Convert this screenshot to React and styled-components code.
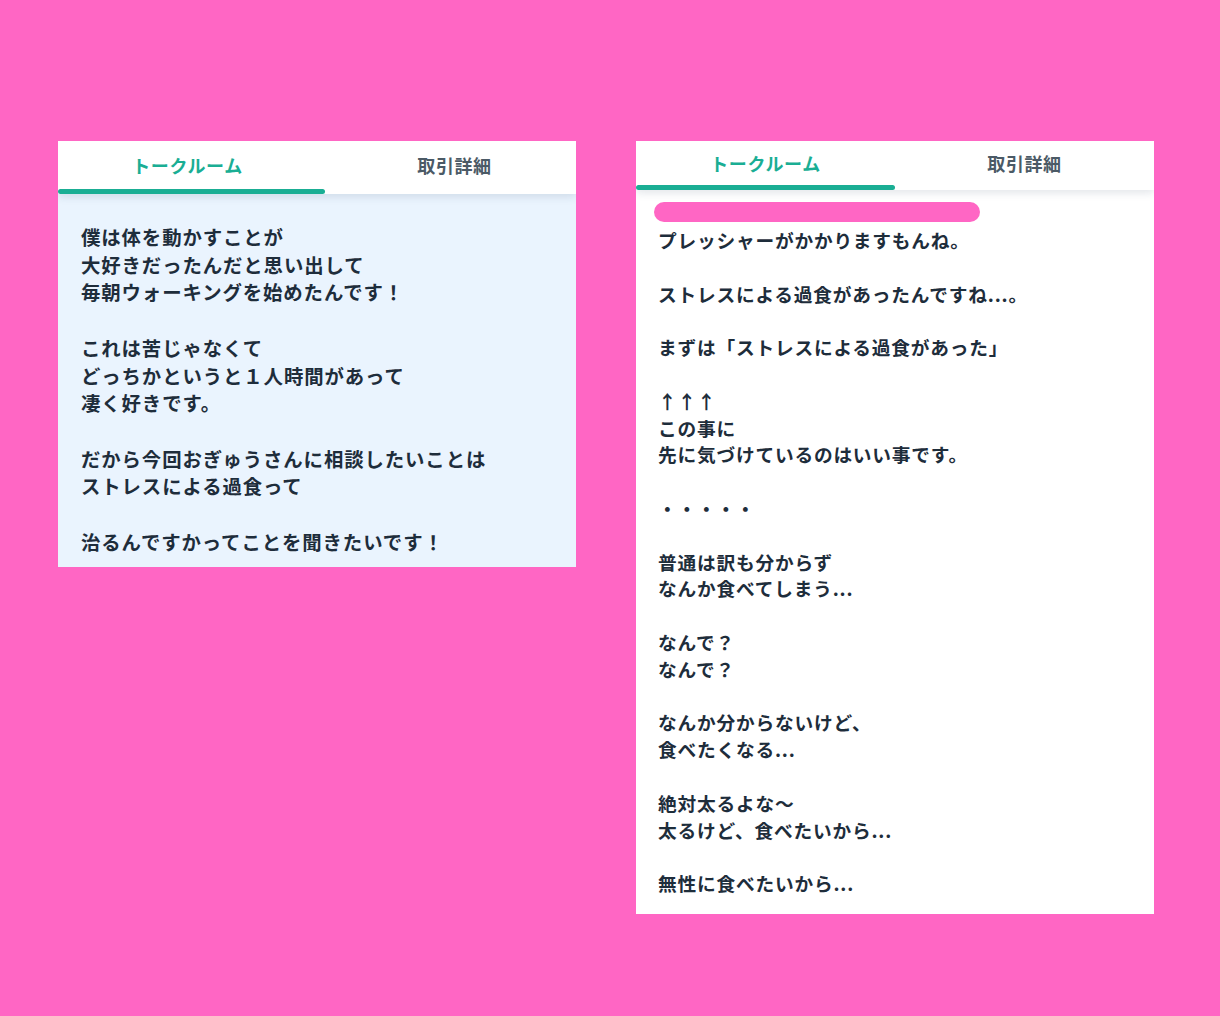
import React from 'react';
import styled, { createGlobalStyle } from 'styled-components';

const GlobalStyle = createGlobalStyle`
  html, body {
    margin: 0;
    padding: 0;
    background: #ff66c4;
  }
  body {
    font-family: "Noto Sans CJK JP", "Noto Sans", sans-serif;
  }
`;

const Page = styled.div`
  display: flex;
  align-items: flex-start;
  gap: 60px;
  padding: 141px 0 0 58px;
  min-height: 1016px;
  box-sizing: border-box;
  background: #ff66c4;
`;

const Card = styled.section`
  width: 518px;
  background: ${(p) => p.$bg};
  overflow: hidden;
`;

const TabBar = styled.div`
  position: relative;
  z-index: 1;
  display: flex;
  height: ${(p) => p.$height}px;
  background: #ffffff;
  box-shadow: 0 3px 8px rgba(40, 60, 90, 0.13);
`;

const Tab = styled.div`
  position: relative;
  display: flex;
  align-items: center;
  justify-content: center;
  flex: 0 0 50%;
  padding: 0 0 6px ${(p) => p.$shift || 0}px;
  box-sizing: border-box;
  font-size: 18px;
  font-weight: 700;
  letter-spacing: 0.6px;
  color: ${(p) => (p.$active ? '#1aae94' : '#4b5a66')};
`;

const Indicator = styled.span`
  position: absolute;
  left: 0;
  bottom: 0;
  width: ${(p) => p.$width}px;
  height: 5px;
  border-radius: 3px;
  background: #1aae94;
`;

const Body = styled.div`
  padding: ${(p) => p.$pad};
  color: #1e2d3b;
  font-weight: 700;
  font-size: ${(p) => p.$size}px;
  line-height: ${(p) => p.$line}px;
  letter-spacing: ${(p) => p.$spacing}px;
`;

const Line = styled.div`
  white-space: pre;
  min-height: ${(p) => p.$line}px;
`;

const Redaction = styled.div`
  width: 326px;
  height: 20px;
  margin: 0 0 5px -4px;
  border-radius: 10px;
  background: #ff66c4;
`;

const leftText = [
  '僕は体を動かすことが',
  '大好きだったんだと思い出して',
  '毎朝ウォーキングを始めたんです！',
  '',
  'これは苦じゃなくて',
  'どっちかというと１人時間があって',
  '凄く好きです。',
  '',
  'だから今回おぎゅうさんに相談したいことは',
  'ストレスによる過食って',
  '',
  '治るんですかってことを聞きたいです！',
];

const rightText = [
  'プレッシャーがかかりますもんね。',
  '',
  'ストレスによる過食があったんですね...。',
  '',
  'まずは「ストレスによる過食があった」',
  '',
  '↑↑↑',
  'この事に',
  '先に気づけているのはいい事です。',
  '',
  '・・・・・',
  '',
  '普通は訳も分からず',
  'なんか食べてしまう...',
  '',
  'なんで？',
  'なんで？',
  '',
  'なんか分からないけど、',
  '食べたくなる...',
  '',
  '絶対太るよな〜',
  '太るけど、食べたいから...',
  '',
  '無性に食べたいから...',
];

function Tabs({ height, indicator, shift }) {
  return (
    <TabBar $height={height}>
      <Tab $active>
        トークルーム
        <Indicator $width={indicator} />
      </Tab>
      <Tab $shift={shift}>取引詳細</Tab>
    </TabBar>
  );
}

export default function App() {
  return (
    <>
      <GlobalStyle />
      <Page>
        <Card $bg="#eaf4fe">
          <Tabs height={53} indicator={267} shift={16} />
          <Body $pad="29px 20px 12px 23px" $size={19.4} $line={27.7} $spacing={0.9}>
            {leftText.map((t, i) => (
              <Line key={i} $line={27.7}>{t}</Line>
            ))}
          </Body>
        </Card>
        <Card $bg="#ffffff">
          <Tabs height={49} indicator={259} shift={0} />
          <Body $pad="12px 20px 17px 22px" $size={18.7} $line={26.8} $spacing={0.8}>
            <Redaction />
            {rightText.map((t, i) => (
              <Line key={i} $line={26.8}>{t}</Line>
            ))}
          </Body>
        </Card>
      </Page>
    </>
  );
}
